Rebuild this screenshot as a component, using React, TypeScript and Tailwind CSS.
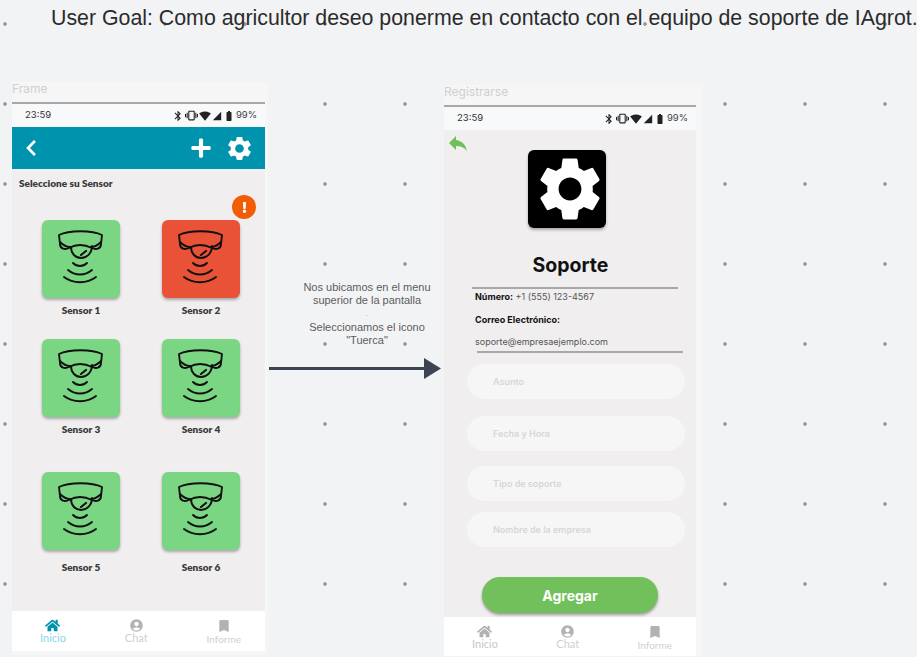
import { FaChevronLeft, FaExclamation, FaHome, FaPlus } from 'react-icons/fa'
import {
  MdAccountCircle,
  MdBatteryFull,
  MdBluetooth,
  MdBookmark,
  MdReply,
  MdSettings,
  MdSignalCellular4Bar,
  MdSignalWifi4Bar,
  MdVibration,
} from 'react-icons/md'

const NUNITO = 'font-["Lato","Noto_Sans",sans-serif]'

function SensorIcon() {
  return (
    <svg viewBox="0 0 78 78" width="78" height="78" fill="none" stroke="#111" strokeWidth="1.9" strokeLinecap="round" strokeLinejoin="round">
      <path d="M17 15 C 27 10, 50 10, 60 15 L 59 24 C 59 29, 54 30, 50 28 C 42 24, 34 24, 27 28 C 23 30, 18 29, 18 24 Z" />
      <path d="M18 22 C 22 26, 25 27, 28 27" />
      <path d="M59 22 C 55 26, 52 27, 49 27" />
      <path d="M29 27 C 29 33, 33 38, 39 38 C 45 38, 50 33, 50 26" />
      <path d="M39 35 L 44 31" strokeWidth="2.2" />
      <path d="M31 43 C 35 47, 41 47, 45 43" />
      <path d="M26 50 C 33 56, 43 56, 50 50" />
      <path d="M22 57 C 31 64, 45 64, 54 57" />
    </svg>
  )
}

function SensorCard({ name, alert, labelGap }: { name: string; alert?: boolean; labelGap?: string }) {
  return (
    <div className="relative flex w-[78px] flex-col items-center">
      {alert && (
        <div className="absolute -right-[16px] -top-[25px] flex h-6 w-6 items-center justify-center rounded-full bg-[#F25C05] text-white">
          <FaExclamation size={11} />
        </div>
      )}
      <div className={`h-[78px] w-[78px] rounded-[6px] shadow-[0_2px_3px_rgba(0,0,0,0.3)] ${alert ? 'bg-[#EA5237]' : 'bg-[#7BD684]'}`}>
        <SensorIcon />
      </div>
      <span className={`${labelGap ?? 'mt-[6px]'} whitespace-nowrap text-[10px] leading-[12px] font-extrabold text-[#3a3a3a] ${NUNITO}`}>{name}</span>
    </div>
  )
}

function StatusBar({ pad }: { pad: string }) {
  return (
    <div className={`flex h-[23px] items-center justify-between bg-[#F8F9FB] text-[9.5px] text-[#333] font-["Inter",sans-serif] ${pad}`}>
      <span>23:59</span>
      <div className="flex items-center gap-[1px] text-[#222]">
        <MdBluetooth size={12} />
        <MdVibration size={13} />
        <MdSignalWifi4Bar size={12} />
        <MdSignalCellular4Bar size={10} />
        <MdBatteryFull size={12} />
        <span className="text-[#444]">99%</span>
      </div>
    </div>
  )
}

function NavItem({ label, active, icon, textClass }: { label: string; active?: boolean; icon: React.ReactNode; textClass: string }) {
  return (
    <div className={`flex flex-col items-center ${active ? 'text-[#0093AE]' : 'text-[#B5B1B2]'}`}>
      {icon}
      <span className={`leading-[10px] font-["Lato",sans-serif] ${textClass}`}>{label}</span>
    </div>
  )
}

function BottomNav({ active, height }: { active?: boolean; height: string }) {
  return (
    <div className={`flex items-start justify-between bg-white pl-[28px] pr-[24px] pt-[7px] ${height}`}>
      <NavItem label="Inicio" active={active} icon={<FaHome size={15} />} textClass={`text-[11px] ${active ? 'text-[#8CD3EE]' : 'text-[#c8c8c8]'}`} />
      <NavItem label="Chat" icon={<MdAccountCircle size={15} />} textClass="text-[11px] text-[#d0d0d0]" />
      <NavItem label="Informe" icon={<MdBookmark size={16} />} textClass="text-[10px] text-[#d0d0d0]" />
    </div>
  )
}

function FrameShell({ title, className, children }: { title: string; className: string; children: React.ReactNode }) {
  return (
    <div className={`absolute bg-[#F6F6F7] ${className}`}>
      <div className={`h-[22px] border-b-2 border-[#A8A8A8] text-[12px] leading-[13px] text-[#CFCFCF] font-["Inter",sans-serif]`}>{title}</div>
      {children}
    </div>
  )
}

function Field({ label, className }: { label: string; className?: string }) {
  return (
    <div className={`flex h-[35px] w-[218px] items-center rounded-full bg-[#F6F6F6] pl-[26px] text-[9px] font-semibold text-[#D6D6D6] font-["Inter",sans-serif] ${className ?? ''}`}>
      {label}
    </div>
  )
}

export default function App() {
  return (
    <div className="relative h-[657px] w-[917px] overflow-hidden bg-[#F2F3F5] bg-[radial-gradient(circle,#9a9a9a_1.5px,transparent_2px)] bg-[size:80px_80px] bg-[position:-35px_-16px] font-['Liberation_Sans',sans-serif]">
      <h1 className="absolute left-[51px] top-[5px] whitespace-nowrap text-[21.33px] leading-[26px] font-normal text-[#2b2b2b]">
        User Goal: Como agricultor deseo ponerme en contacto con el equipo de soporte de IAgrot.
      </h1>

      <FrameShell title="Frame" className="left-[12px] top-[82px] w-[256px] pr-[3px] pb-[4px]">
        <StatusBar pad="pl-[13px] pr-[8px]" />
        <div className="flex h-[42px] items-center bg-[#0093AE] pl-[10px] pr-[11px] text-white">
          <FaChevronLeft size={18} />
          <FaPlus size={22} className="ml-auto" />
          <MdSettings size={29} className="ml-[13px]" />
        </div>
        <div className="h-[442px] bg-[#F0EEEF]">
          <p className={`pl-[7px] pt-[8px] text-[10px] leading-[12px] font-extrabold text-[#3a3a3a] ${NUNITO}`}>Seleccione su Sensor</p>
          <div className="mt-[31px] grid grid-cols-[78px_78px] gap-x-[42px] pl-[30px]">
            <SensorCard name="Sensor 1" />
            <SensorCard name="Sensor 2" alert />
            <div className="mt-[23px]"><SensorCard name="Sensor 3" /></div>
            <div className="mt-[23px]"><SensorCard name="Sensor 4" /></div>
            <div className="mt-[37px]"><SensorCard name="Sensor 5" labelGap="mt-[11px]" /></div>
            <div className="mt-[37px]"><SensorCard name="Sensor 6" labelGap="mt-[11px]" /></div>
          </div>
        </div>
        <BottomNav active height="h-[40px]" />
      </FrameShell>

      <div className="absolute left-[269px] top-[358px] text-[#3B4450]">
        <svg width="173" height="21" viewBox="0 0 173 21">
          <rect x="0" y="9" width="156" height="3" fill="currentColor" />
          <path d="M155 0 L172 10.5 L155 21 Z" fill="currentColor" />
        </svg>
      </div>

      <div className="absolute left-[283px] top-[281px] w-[168px] text-center text-[11px] leading-[13px] text-[#5c5c5c]">
        <p>Nos ubicamos en el menu</p>
        <p>superior de la pantalla</p>
        <p className="text-[6px] leading-[14px]">.</p>
        <p>Seleccionamos el icono</p>
        <p>"Tuerca"</p>
      </div>

      <FrameShell title="Registrarse" className="left-[444px] top-[85px] w-[258px] pr-[6px]">
        <StatusBar pad="pl-[13px] pr-[8px]" />
        <div className="relative h-[487px] bg-[#F0EEEF] font-['Inter',sans-serif]">
          <MdReply size={24} className="absolute left-[2px] top-[1px] text-[#6FBF5A]" />
          <div className="ml-[84px] pt-[20px]">
            <div className="flex h-[78px] w-[78px] items-center justify-center rounded-[6px] bg-black text-white shadow-[0_2px_3px_rgba(0,0,0,0.3)]">
              <MdSettings size={76} className="ml-[5px] shrink-0" />
            </div>
          </div>
          <h2 className="mt-[24px] pl-[1px] text-center text-[19.5px] leading-[26px] font-bold text-[#111]">Soporte</h2>
          <div className="ml-[28px] mt-[9px] h-[2px] w-[206px] bg-[#A8A8A8]" />
          <p className="pl-[31px] pt-[1px] text-[9px] leading-[14px] text-[#555]">
            <span className="font-bold text-[#111]">Número:</span> +1 (555) 123-4567
          </p>
          <p className="pl-[31px] pt-[9px] text-[9px] leading-[14px] font-bold text-[#111]">Correo Electrónico:</p>
          <p className="pl-[31px] pt-[8px] text-[9px] leading-[14px] text-[#555]">soporte@empresaejemplo.com</p>
          <div className="ml-[33px] mt-[2px] h-[2px] w-[206px] bg-[#A8A8A8]" />
          <div className="ml-[23px] mt-[11px] flex flex-col">
            <Field label="Asunto" />
            <Field label="Fecha y Hora" className="mt-[17px]" />
            <Field label="Tipo de soporte" className="mt-[15px]" />
            <Field label="Nombre de la empresa" className="mt-[11px]" />
          </div>
          <div className="ml-[38px] mt-[30px] flex h-[36px] w-[176px] items-center justify-center rounded-full bg-[#72C05C] text-[14px] font-bold text-white shadow-[0_2px_3px_rgba(0,0,0,0.35)]">
            Agregar
          </div>
        </div>
        <BottomNav height="h-[39px]" />
      </FrameShell>
    </div>
  )
}
